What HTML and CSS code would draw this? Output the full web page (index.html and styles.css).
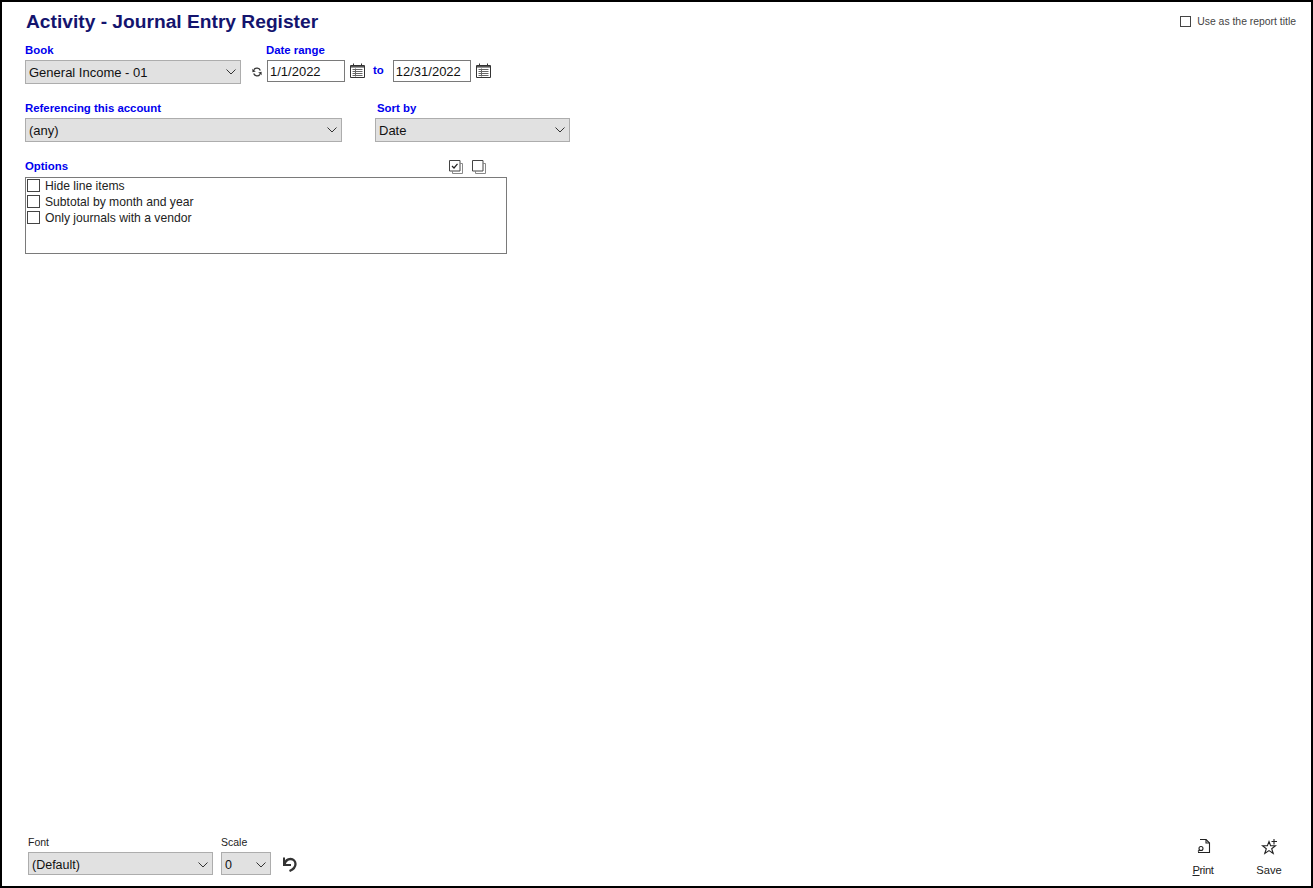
FILE: index.html
```html
<!DOCTYPE html>
<html lang="en">
<head>
<meta charset="utf-8">
<title>Activity - Journal Entry Register</title>
<link rel="stylesheet" href="styles.css">
</head>
<body>
<main class="frame">
  <header class="head">
    <h1 class="title">Activity - Journal Entry Register</h1>
    <label class="report-title"><span class="check small"></span><span>Use as the report title</span></label>
  </header>

  <section class="row row-one">
    <div class="field book">
      <div class="label">Book</div>
      <div class="select w-book"><span>General Income - 01</span><svg class="chev" viewBox="0 0 10 6"><path d="M.5.5 5 5 9.500.5"/></svg></div>
    </div>
    <svg class="refresh" viewBox="0 0 10 10"><path d="M8.300 3.400A3.600 3.600 0 0 0 2 2.700M1.700 6.600A3.600 3.600 0 0 0 8 7.300"/><path class="fill" d="M.4 1.800 3.800 4.400 .4 5.200ZM9.600 8.200 6.200 5.600 9.600 4.800Z"/></svg>
    <div class="field dates">
      <div class="label date-label">Date range</div>
      <div class="date-row">
        <div class="input">1/1/2022</div>
        <svg class="cal" viewBox="0 0 15 15"><path d="M.5 2.500h14v12H.5z"/><path d="M3.500.5v3M11.500.5v3"/><path class="thick" d="M1 3h13v1.600H1z"/><path class="lines" d="M2.500 6.500h10M2.500 8.500h10M2.500 10.500h10M2.500 12.500h10M5.500 5.500v8"/></svg>
        <div class="label to">to</div>
        <div class="input">12/31/2022</div>
        <svg class="cal" viewBox="0 0 15 15"><path d="M.5 2.500h14v12H.5z"/><path d="M3.500.5v3M11.500.5v3"/><path class="thick" d="M1 3h13v1.600H1z"/><path class="lines" d="M2.500 6.500h10M2.500 8.500h10M2.500 10.500h10M2.500 12.500h10M5.500 5.500v8"/></svg>
      </div>
    </div>
  </section>

  <section class="row row-two">
    <div class="field">
      <div class="label">Referencing this account</div>
      <div class="select w-account"><span>(any)</span><svg class="chev" viewBox="0 0 10 6"><path d="M.5.5 5 5 9.500.5"/></svg></div>
    </div>
    <div class="field">
      <div class="label sort-label">Sort by</div>
      <div class="select w-sort"><span>Date</span><svg class="chev" viewBox="0 0 10 6"><path d="M.5.5 5 5 9.500.5"/></svg></div>
    </div>
  </section>

  <section class="options">
    <div class="options-head">
      <div class="label">Options</div>
      <div class="options-tools">
        <svg class="stack" viewBox="0 0 14 14"><path class="back" d="M3.500 11.500v2h10v-10h-2"/><path d="M.5.5h10.500v10.500H.5z"/><path class="tick" d="M3 6 5 8 8.500 3.800"/></svg>
        <svg class="stack" viewBox="0 0 14 14"><path class="back" d="M3.500 11.500v2h10v-10h-2"/><path d="M.5.5h10.500v10.500H.5z"/></svg>
      </div>
    </div>
    <div class="list">
      <div class="item"><span class="check"></span><span>Hide line items</span></div>
      <div class="item"><span class="check"></span><span>Subtotal by month and year</span></div>
      <div class="item"><span class="check"></span><span>Only journals with a vendor</span></div>
    </div>
  </section>

  <footer class="foot">
    <div class="foot-left">
      <div class="field">
        <div class="foot-label">Font</div>
        <div class="select w-font"><span>(Default)</span><svg class="chev" viewBox="0 0 10 6"><path d="M.5.5 5 5 9.500.5"/></svg></div>
      </div>
      <div class="field">
        <div class="foot-label">Scale</div>
        <div class="select w-scale"><span>0</span><svg class="chev" viewBox="0 0 10 6"><path d="M.5.5 5 5 9.500.5"/></svg></div>
      </div>
      <svg class="undo" viewBox="0 0 15 15"><path d="M2.500 7.500C3.500 3.500 6 2 8.500 2 11.500 2 13.500 4.500 13.500 7 13.500 10 11 12.500 7.500 14"/><path class="corner" d="M2 .5V8H9"/></svg>
    </div>
    <div class="foot-right">
      <div class="action">
        <svg class="action-icon" viewBox="0 0 16 16"><path d="M5 .5H11L14.500 4V13.500H3"/><path d="M11 .5V4H14.500"/><circle cx="6" cy="9.500" r="2"/><path d="M4.500 11 3 12.500"/></svg>
        <span class="print"><u>P</u>rint</span>
      </div>
      <div class="action">
        <svg class="action-icon" viewBox="0 0 16 16"><path d="M8 2.500 9.600 6.800H14.500L10.700 9.700 12.200 14.500 8 11.600 3.800 14.500 5.300 9.700 1.500 6.800H6.400Z"/><path d="M13 0v5.500M10.500 2.500h5.500"/></svg>
        <span>Save</span>
      </div>
    </div>
  </footer>
</main>
</body>
</html>
```
FILE: styles.css
```css
* { box-sizing: border-box; }
html, body { margin: 0; height: 100%; }
body { background: #fff; font-family: "Liberation Sans", Arial, sans-serif; color: #111; overflow: hidden; }

.frame {
  width: 1313px; height: 888px;
  border: 2px solid #000;
  display: flex; flex-direction: column;
  padding: 0 9px 11px 23px;
}

.head { display: flex; justify-content: space-between; height: 41px; padding-right: 6px; }
.title { margin: 9px 0 0 1px; font-size: 19.2px; line-height: 22px; font-weight: bold; color: #14146e; }
.report-title { display: flex; align-items: center; gap: 6px; height: 12px; margin-top: 13px; font-size: 10.4px; color: #444; }

.label { font-size: 11.4px; line-height: 13px; font-weight: bold; color: #0000ee; height: 17px; padding-top: 1px; }
.field { display: flex; flex-direction: column; }

.row { display: flex; }
.row-one { height: 58px; }
.row-two { gap: 33px; height: 57px; }

.select {
  display: flex; align-items: center; justify-content: space-between;
  height: 24px; padding: 0 4px 0 3px;
  background: #e1e1e1; border: 1px solid #adadad;
  font-size: 13px; color: #111;
}
.w-book { width: 216px; }
.w-account { width: 317px; }
.w-sort { width: 195px; }
.w-font { width: 185px; height: 23px; padding-top: 2px; font-size: 12.5px; }
.w-scale { width: 50px; height: 23px; padding-top: 2px; font-size: 12.5px; }
.chev { width: 10px; height: 6px; fill: none; stroke: #333; stroke-width: 1; }

.refresh { width: 10px; height: 10px; margin: 24px 5px 0 11px; fill: none; stroke: #333; stroke-width: 1.3; }
.refresh .fill { fill: #333; stroke: none; }

.date-label { margin-left: -1px; }
.date-row { display: flex; align-items: flex-start; }
.input { width: 78px; height: 22px; padding: 0 2px; border: 1px solid #7a7a7a; font-size: 13px; line-height: 21px; }
.cal { width: 15px; height: 15px; margin: 3px 7px 0 5px; fill: none; stroke: #333; stroke-width: 1; }
.cal .thick { fill: #555; stroke: none; }
.cal .lines { stroke: #666; }
.date-row .to { margin: 3px 9px 0 1px; }

.sort-label { margin-left: 2px; }

.options-head { display: flex; width: 482px; height: 19px; }
.options-head .label { padding-top: 2px; }
.options-tools { display: flex; gap: 9px; margin-left: 381px; margin-top: 2px; }
.stack { width: 14px; height: 14px; fill: none; stroke: #444; stroke-width: 1; }
.stack .back { stroke: #888; }
.stack .tick { stroke: #222; stroke-width: 1.2; }

.list { width: 482px; height: 77px; border: 1px solid #7a7a7a; padding: 0 1px; }
.item { display: flex; align-items: center; gap: 5px; height: 16px; font-size: 12.15px; color: #222; }
.item .check { margin-top: -1px; }
.check { width: 13px; height: 13px; border: 1px solid #444; background: #fff; flex: none; }
.check.small { width: 11px; height: 11px; }

.foot { margin-top: auto; display: flex; justify-content: space-between; align-items: flex-end; }
.foot-left { display: flex; gap: 8px; margin-left: 3px; }
.foot-label { font-size: 10.5px; line-height: 10px; height: 15px; color: #222; }
.undo { width: 15px; height: 15px; margin: 20px 0 0 3px; fill: none; stroke: #333; stroke-width: 2.3; }
.undo .corner { stroke-width: 2; }

.foot-right { display: flex; margin-bottom: -2px; }
.action { width: 66px; display: flex; flex-direction: column; align-items: center; font-size: 11.2px; line-height: 13px; color: #222; gap: 9px; }
.print { letter-spacing: -0.4px; }
.action-icon { width: 16px; height: 16px; fill: none; stroke: #222; stroke-width: 1.1; }
```
